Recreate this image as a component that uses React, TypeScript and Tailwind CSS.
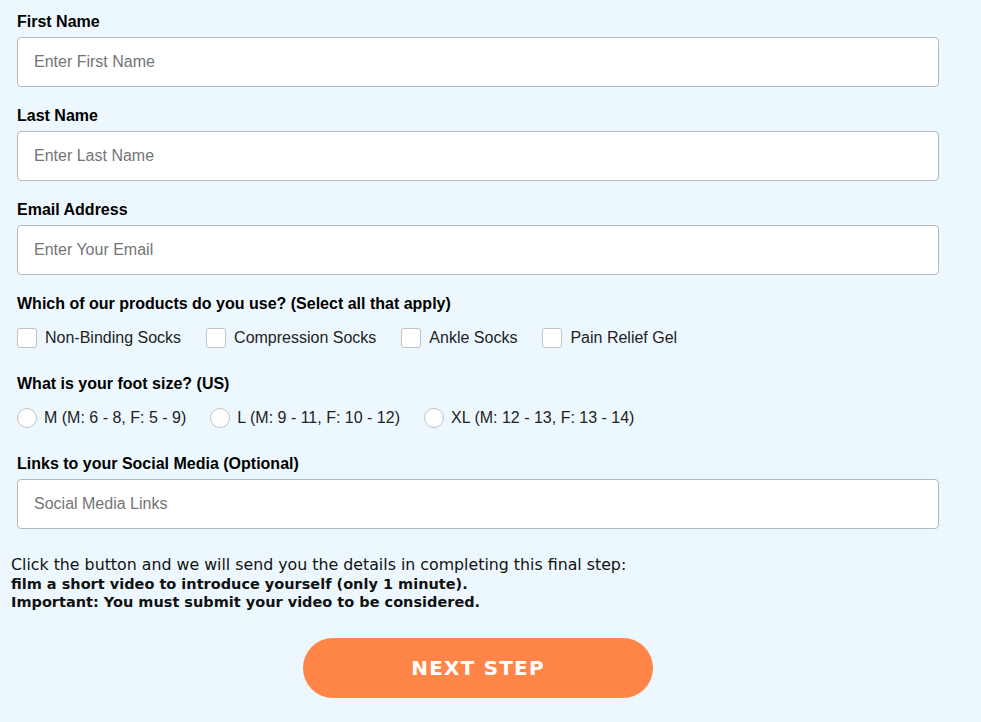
import { useState } from "react";

const products = ["Non-Binding Socks", "Compression Socks", "Ankle Socks", "Pain Relief Gel"];
const sizes = ["M (M: 6 - 8, F: 5 - 9)", "L (M: 9 - 11, F: 10 - 12)", "XL (M: 12 - 13, F: 13 - 14)"];

const Field = ({ label, placeholder }: { label: string; placeholder: string }) => (
  <div className="flex flex-col">
    <label className="text-[16px] leading-[18px] font-bold text-black mb-[6px]">{label}</label>
    <input
      placeholder={placeholder}
      className="h-[50px] w-full rounded-[4px] border border-[#b4b9bf] bg-white px-4 text-[16px] text-black placeholder:text-[#757575] outline-none"
    />
  </div>
);

const App = () => {
  const [picked, setPicked] = useState<string[]>([]);
  const [size, setSize] = useState("");

  const toggle = (p: string) =>
    setPicked(picked.includes(p) ? picked.filter((x) => x !== p) : [...picked, p]);

  return (
    <div className="min-h-screen bg-[#edf8fe] px-[11px] pt-[13px] pb-6" style={{ fontFamily: '"Liberation Sans", Arial, sans-serif' }}>
      <form className="w-[934px] flex flex-col" onSubmit={(e) => e.preventDefault()}>
        <div className="px-[6px] flex flex-col gap-[20px]">
          <Field label="First Name" placeholder="Enter First Name" />
          <Field label="Last Name" placeholder="Enter Last Name" />
          <Field label="Email Address" placeholder="Enter Your Email" />
        </div>

        {/* products */}
        <div className="px-[6px] mt-[20px]">
          <div className="text-[16px] leading-[18px] font-bold text-black">Which of our products do you use? (Select all that apply)</div>
          <div className="flex items-center gap-[25px] mt-[15px]">
            {products.map((p) => (
              <label key={p} className="flex items-center gap-[8px] cursor-pointer" onClick={() => toggle(p)}>
                <span className="w-[20px] h-[20px] rounded-[3px] border border-[#bfc3c7] bg-white flex items-center justify-center">
                  {picked.includes(p) && <span className="w-[10px] h-[10px] bg-[#ff8548] rounded-[1px]" />}
                </span>
                <span className="text-[16px] leading-[20px] text-[#222]">{p}</span>
              </label>
            ))}
          </div>
        </div>

        {/* sizes */}
        <div className="px-[6px] mt-[27px]">
          <div className="text-[16px] leading-[18px] font-bold text-black">What is your foot size? (US)</div>
          <div className="flex items-center gap-[24px] mt-[15px]">
            {sizes.map((s) => (
              <label key={s} className="flex items-center gap-[7px] cursor-pointer" onClick={() => setSize(s)}>
                <span className="w-[20px] h-[20px] rounded-full border border-[#bfc3c7] bg-white flex items-center justify-center">
                  {size === s && <span className="w-[10px] h-[10px] bg-[#ff8548] rounded-full" />}
                </span>
                <span className="text-[16px] leading-[20px] text-[#222]">{s}</span>
              </label>
            ))}
          </div>
        </div>

        <div className="px-[6px] mt-[27px]">
          <Field label="Links to your Social Media (Optional)" placeholder="Social Media Links" />
        </div>

        <div className="mt-[27px] text-[15.8px] leading-[18.5px] text-[#111]" style={{ fontFamily: '"DejaVu Sans", sans-serif' }}>
          <p>Click the button and we will send you the details in completing this final step:</p>
          <p className="font-bold text-[14.5px]">film a short video to introduce yourself (only 1 minute).</p>
          <p className="font-bold text-[14.5px]">Important: You must submit your video to be considered.</p>
        </div>

        <div className="flex justify-center mt-[26px]">
          <button
            type="submit"
            className="w-[350px] h-[60px] rounded-full bg-[#ff8548] text-white text-[20px] font-bold tracking-[1.2px]"
            style={{ fontFamily: '"DejaVu Sans", sans-serif' }}
          >
            NEXT STEP
          </button>
        </div>
      </form>
    </div>
  );
};

export default App;
